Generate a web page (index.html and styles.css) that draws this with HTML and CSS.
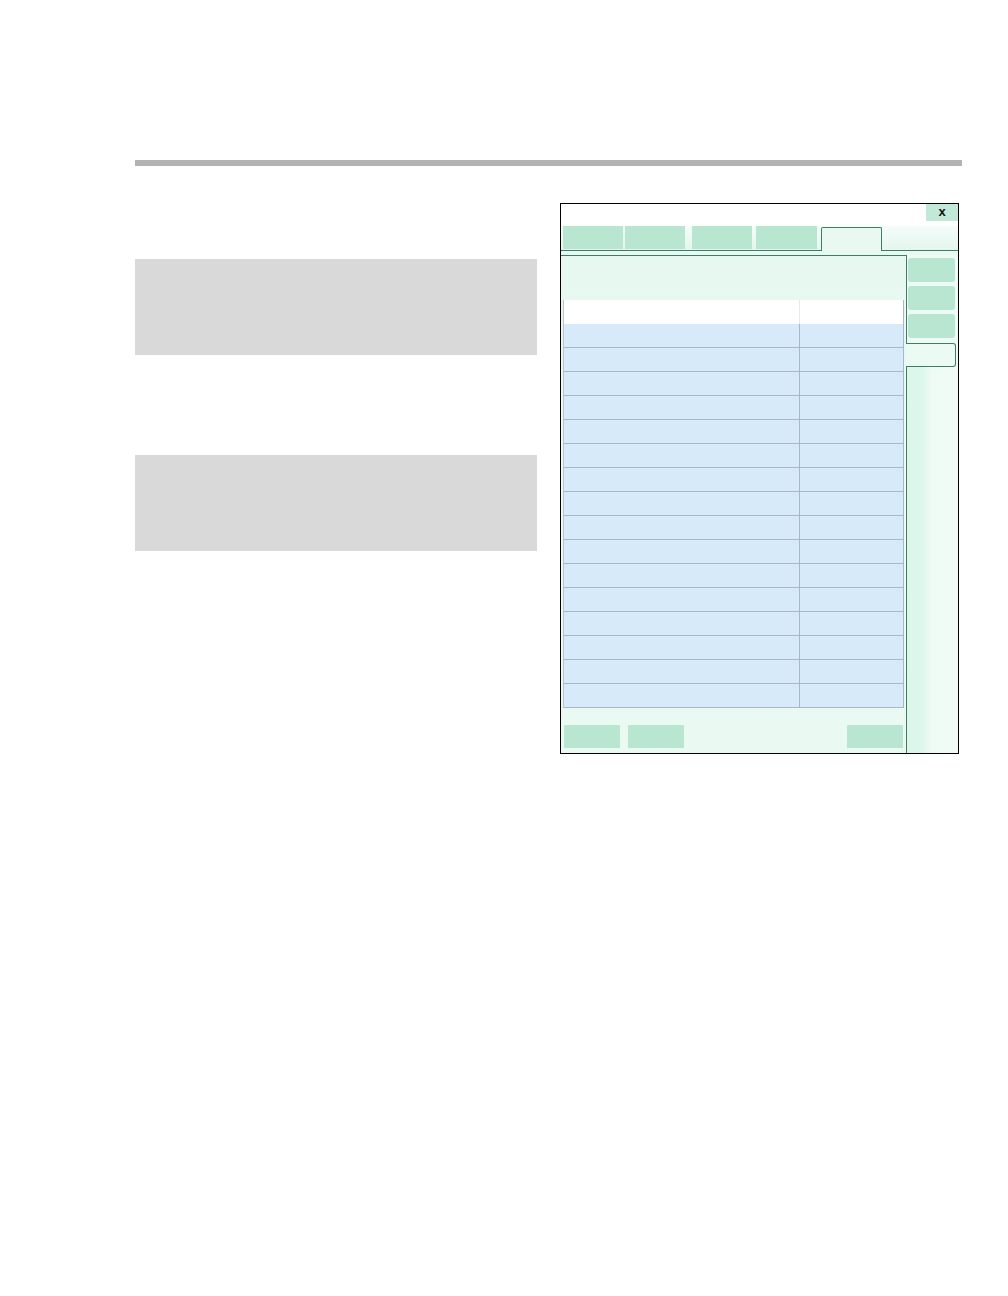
FILE: index.html
```html
<!DOCTYPE html>
<html>
<head>
<meta charset="utf-8">
<link rel="stylesheet" href="styles.css">
</head>
<body>
<div class="page">
  <div class="rule"></div>
  <div class="main">
    <div class="left">
      <div class="graybox"></div>
      <div class="graybox"></div>
    </div>
    <div class="dialog">
      <div class="titlebar"><div class="close">x</div></div>
      <div class="tabrow">
        <div class="tab t1"></div>
        <div class="tab t2"></div>
        <div class="tab t3"></div>
        <div class="tab t4"></div>
        <div class="tab active"></div>
      </div>
      <div class="gapstrip"></div>
      <div class="body">
        <div class="panel">
          <div class="table">
            <div class="row head"><div class="c1"></div><div class="c2"></div></div>
            <div class="row"><div class="c1"></div><div class="c2"></div></div>
            <div class="row"><div class="c1"></div><div class="c2"></div></div>
            <div class="row"><div class="c1"></div><div class="c2"></div></div>
            <div class="row"><div class="c1"></div><div class="c2"></div></div>
            <div class="row"><div class="c1"></div><div class="c2"></div></div>
            <div class="row"><div class="c1"></div><div class="c2"></div></div>
            <div class="row"><div class="c1"></div><div class="c2"></div></div>
            <div class="row"><div class="c1"></div><div class="c2"></div></div>
            <div class="row"><div class="c1"></div><div class="c2"></div></div>
            <div class="row"><div class="c1"></div><div class="c2"></div></div>
            <div class="row"><div class="c1"></div><div class="c2"></div></div>
            <div class="row"><div class="c1"></div><div class="c2"></div></div>
            <div class="row"><div class="c1"></div><div class="c2"></div></div>
            <div class="row"><div class="c1"></div><div class="c2"></div></div>
            <div class="row"><div class="c1"></div><div class="c2"></div></div>
            <div class="row"><div class="c1"></div><div class="c2"></div></div>
          </div>
          <div class="buttons">
            <div class="btn b1"></div>
            <div class="btn b2"></div>
            <div class="btn b3"></div>
          </div>
        </div>
        <div class="side">
          <div class="sbtn"></div>
          <div class="sbtn"></div>
          <div class="sbtn last"></div>
          <div class="vtab"></div>
          <div class="sidefill"></div>
        </div>
      </div>
    </div>
  </div>
</div>
</body>
</html>
```

FILE: styles.css
```css
html, body {
  margin: 0;
  padding: 0;
  background: #ffffff;
  font-family: "Liberation Sans", Arial, sans-serif;
}

.page {
  padding: 160px 0 0 135px;
}

.rule {
  width: 827px;
  height: 6px;
  background: #b3b3b3;
}

.main {
  display: flex;
  gap: 23px;
  margin-top: 37px;
}

.left {
  width: 402px;
  padding-top: 56px;
  display: flex;
  flex-direction: column;
  gap: 100px;
}

.graybox {
  height: 96px;
  background: #d9d9d9;
}

.dialog {
  width: 399px;
  height: 551px;
  box-sizing: border-box;
  border: 1px solid #000000;
  display: flex;
  flex-direction: column;
  background: #ffffff;
}

.titlebar {
  height: 22px;
  display: flex;
  justify-content: flex-end;
  align-items: flex-start;
  background: #ffffff;
}

.close {
  width: 32px;
  height: 17px;
  background: #c2e9d8;
  color: #111111;
  font-size: 13px;
  font-weight: bold;
  line-height: 15px;
  text-align: center;
}

.tabrow {
  height: 25px;
  box-sizing: border-box;
  border-bottom: 1px solid #3f7c67;
  padding-left: 2px;
  display: flex;
  align-items: flex-start;
  background: linear-gradient(#f5fcf9, #e4f6ee);
}

.tab {
  height: 23px;
  background: #b8e6d1;
}

.t1 { width: 60px; margin-right: 2px; }
.t2 { width: 60px; margin-right: 7px; }
.t3 { width: 60px; margin-right: 4px; }
.t4 { width: 61px; margin-right: 4px; }

.tab.active {
  width: 61px;
  height: 24px;
  margin-top: 1px;
  box-sizing: border-box;
  border: 1px solid #3f7c67;
  border-bottom: none;
  border-radius: 2px 2px 0 0;
  background: #e9f9f1;
}

.gapstrip {
  height: 4px;
  background: #e9f9f1;
}

.body {
  flex: 1;
  display: flex;
  background: #e9f9f1;
}

.panel {
  width: 346px;
  box-sizing: border-box;
  border-top: 1px solid #3f7c67;
  border-right: 1px solid #3f7c67;
  padding: 44px 2px 0 2px;
  background: linear-gradient(#e6f8f0, #ecfaf3 40%, #eaf9f2);
  display: flex;
  flex-direction: column;
}

.table {
  width: 341px;
  box-sizing: border-box;
  border-left: 1px solid #b7c5d2;
  border-right: 1px solid #a7b7c6;
  border-bottom: 1px solid #a7b7c6;
}

.row {
  display: flex;
  height: 24px;
  box-sizing: border-box;
  border-bottom: 1px solid #a7b7c6;
  background: #d7eafa;
}

.row:nth-child(2) {
  border-top: none;
}

.row:last-child {
  border-bottom: none;
  height: 23px;
}

.row.head {
  height: 24px;
  background: #ffffff;
  border-bottom: none;
}

.c1 {
  width: 235px;
}

.c2 {
  flex: 1;
  border-left: 1px solid #a7b7c6;
}

.head .c2 {
  border-left-color: #e4eaee;
}

.buttons {
  display: flex;
  margin-top: 17px;
  padding: 0 1px;
}

.btn {
  width: 56px;
  height: 23px;
  background: #b9e6d1;
  border-radius: 1px;
}

.b1 { margin-right: 8px; }
.b3 { margin-left: auto; }

.side {
  flex: 1;
  display: flex;
  flex-direction: column;
  padding-top: 3px;
  background: #eefaf5;
}

.sbtn {
  width: 47px;
  height: 24px;
  margin-left: 1px;
  margin-bottom: 4px;
  background: #b8e6d1;
  border-radius: 3px;
}

.sbtn.last {
  margin-bottom: 5px;
}

.vtab {
  width: 50px;
  height: 24px;
  margin-left: -1px;
  box-sizing: border-box;
  border: 1px solid #3f7c67;
  border-left: none;
  border-radius: 0 3px 3px 0;
  background: #ecfaf4;
}

.sidefill {
  flex: 1;
  background: linear-gradient(90deg, #dcf6ea 0, #dcf6ea 15px, #eefbf5 24px, #f0fbf6 100%);
}
```
